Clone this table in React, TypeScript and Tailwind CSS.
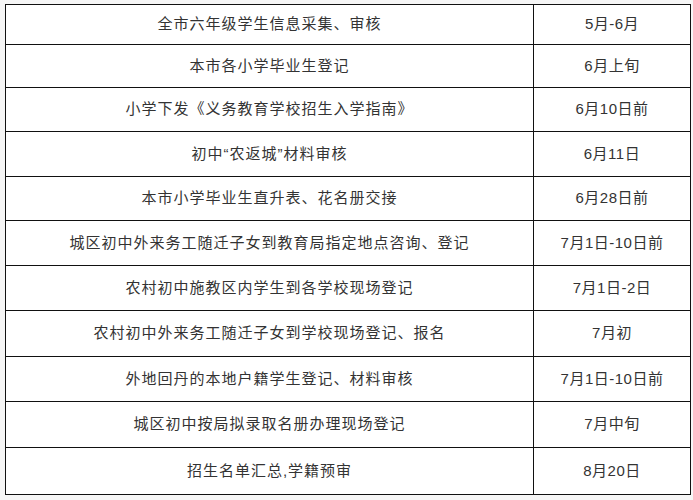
const rows: { item: string; date: string; h: string }[] = [
  { item: "全市六年级学生信息采集、审核", date: "5月-6月", h: "h-[40px]" },
  { item: "本市各小学毕业生登记", date: "6月上旬", h: "h-[43px]" },
  { item: "小学下发《义务教育学校招生入学指南》", date: "6月10日前", h: "h-[44px]" },
  { item: "初中\u201c农返城\u201d材料审核", date: "6月11日", h: "h-[45px]" },
  { item: "本市小学毕业生直升表、花名册交接", date: "6月28日前", h: "h-[44px]" },
  { item: "城区初中外来务工随迁子女到教育局指定地点咨询、登记", date: "7月1日-10日前", h: "h-[45px]" },
  { item: "农村初中施教区内学生到各学校现场登记", date: "7月1日-2日", h: "h-[45px]" },
  { item: "农村初中外来务工随迁子女到学校现场登记、报名", date: "7月初", h: "h-[46px]" },
  { item: "外地回丹的本地户籍学生登记、材料审核", date: "7月1日-10日前", h: "h-[45px]" },
  { item: "城区初中按局拟录取名册办理现场登记", date: "7月中旬", h: "h-[46px]" },
  { item: "招生名单汇总,学籍预审", date: "8月20日", h: "h-[46px]" },
];

export default function App() {
  return (
    <div className="w-[693px] h-[500px] bg-[#f6f6f6] pl-[5px] pt-[4px] font-['Liberation_Sans','Noto_Sans_CJK_SC',sans-serif] text-[15px] text-[#333]">
      <div className="w-[686px] border border-[#111] bg-white">
        {rows.map((r, i) => (
          <div
            key={r.item}
            className={`flex ${r.h} ${i < rows.length - 1 ? "border-b border-[#111]" : ""}`}
          >
            <div className="w-[528px] border-r border-[#111] flex items-center justify-center tracking-[1px]">
              {r.item}
            </div>
            <div className="flex-1 flex items-center justify-center tracking-[0.5px]">
              {r.date}
            </div>
          </div>
        ))}
      </div>
    </div>
  );
}
